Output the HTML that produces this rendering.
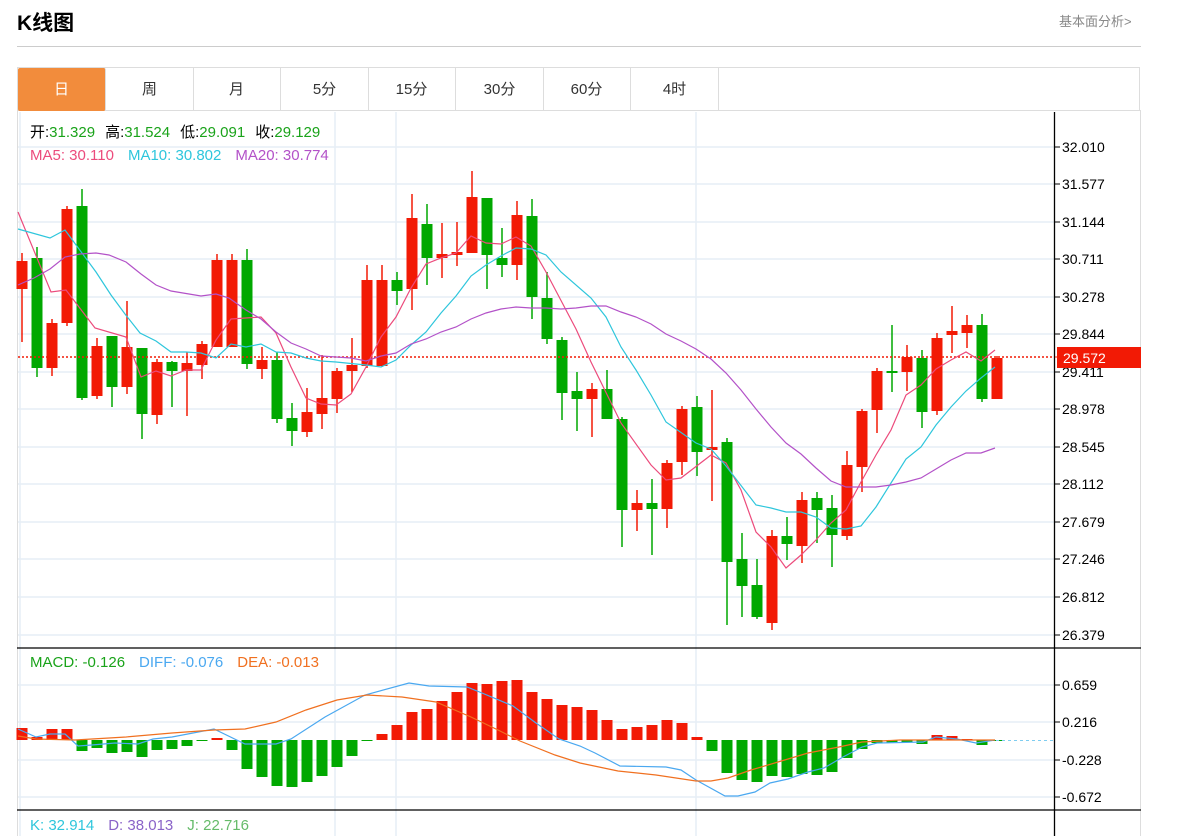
<!DOCTYPE html>
<html><head><meta charset="utf-8">
<style>
body{margin:0;background:#fff;width:1177px;height:836px;overflow:hidden;font-family:"Liberation Sans","Noto Sans CJK SC",sans-serif;}
.t{position:absolute;left:17px;top:7px;font-size:21px;font-weight:bold;color:#000;}
.r{position:absolute;left:1059px;top:11px;font-size:13px;color:#888;}
.hl{position:absolute;left:17px;top:46px;width:1124px;height:1px;background:#ccc;}
.tabs{position:absolute;left:17px;top:67px;width:1123px;height:44px;border:1px solid #ddd;box-sizing:border-box;}
.tab{position:absolute;top:0;height:43px;width:88px;border-right:1px solid #ddd;box-sizing:border-box;text-align:center;line-height:43px;font-size:15px;color:#333;}
.act{background:#f28c3c;color:#fff;border-radius:2px;}
.box{position:absolute;left:17px;top:110px;width:1124px;height:726px;border-left:1px solid #ddd;border-right:1px solid #ddd;box-sizing:border-box;}
svg{position:absolute;left:0;top:0;}
</style></head><body>
<div class="t">K线图</div>
<div class="r">基本面分析&gt;</div>
<div class="hl"></div>
<div class="tabs">
<div class="tab act" style="left:0">日</div>
<div class="tab" style="left:88px">周</div>
<div class="tab" style="left:175px">月</div>
<div class="tab" style="left:263px">5分</div>
<div class="tab" style="left:350px">15分</div>
<div class="tab" style="left:438px">30分</div>
<div class="tab" style="left:525px">60分</div>
<div class="tab" style="left:613px">4时</div>
</div>
<div class="box"></div>
<svg id="s" width="1177" height="836" xmlns="http://www.w3.org/2000/svg" font-family="Liberation Sans, Noto Sans CJK SC, sans-serif">
<g id="grid" stroke="#e6eef5" stroke-width="1.5"></g>
<g id="c"></g>
<line x1="18" y1="357" x2="1055" y2="357" stroke="#f21a05" stroke-width="1.5" stroke-dasharray="2,2"/>
<g id="ma" fill="none" stroke-width="1.2"></g>
<line x1="17" y1="648" x2="1141" y2="648" stroke="#000" stroke-width="1.3"/>
<line x1="17" y1="810" x2="1141" y2="810" stroke="#000" stroke-width="1.3"/>
<line x1="1054.5" y1="112" x2="1054.5" y2="836" stroke="#000" stroke-width="1.3"/>
<line x1="996" y1="740.5" x2="1055" y2="740.5" stroke="#7fcdf0" stroke-dasharray="3,3"/>
<g id="ax" font-size="14" fill="#000"></g>
<rect x="1057" y="347" width="84" height="21" fill="#f21a05"/>
<line x1="1055" y1="357" x2="1060" y2="357" stroke="#f21a05"/>
<text x="1063" y="363" font-size="14" fill="#fff">29.572</text>
<text x="30" y="137" font-size="15"><tspan fill="#000">开:</tspan><tspan fill="#1aa31a">31.329</tspan><tspan fill="#000" dx="10">高:</tspan><tspan fill="#1aa31a">31.524</tspan><tspan fill="#000" dx="10">低:</tspan><tspan fill="#1aa31a">29.091</tspan><tspan fill="#000" dx="10">收:</tspan><tspan fill="#1aa31a">29.129</tspan></text>
<text x="30" y="160" font-size="15"><tspan fill="#ec4b7c">MA5: 30.110</tspan><tspan fill="#2ec6dc" dx="14">MA10: 30.802</tspan><tspan fill="#b352c8" dx="14">MA20: 30.774</tspan></text>
<text x="30" y="667" font-size="15"><tspan fill="#1aa31a">MACD: -0.126</tspan><tspan fill="#4aa8f0" dx="14">DIFF: -0.076</tspan><tspan fill="#f07020" dx="14">DEA: -0.013</tspan></text>
<text x="30" y="830" font-size="15"><tspan fill="#2ec6dc">K: 32.914</tspan><tspan fill="#8a63c8" dx="14">D: 38.013</tspan><tspan fill="#66bb6a" dx="14">J: 22.716</tspan></text>
</svg>
<script>
var NS="http://www.w3.org/2000/svg";
function el(p,t,a){var e=document.createElementNS(NS,t);for(var k in a)e.setAttribute(k,a[k]);document.getElementById(p).appendChild(e);return e;}
var gy=[147,184,222,259,297,334,372,409,447,484,522,559,597,635,685,722,760,797];
gy.forEach(function(y){el('grid','line',{x1:18,y1:y,x2:1055,y2:y});});
[20,335,396,696].forEach(function(x){el('grid','line',{x1:x,y1:112,x2:x,y2:836});});
var R="#f21a05",G="#00a800";
var d=[
['r',261,289,253,342],['g',258,368,247,377],['r',323,368,319,376],['r',209,323,206,326],['g',206,398,189,400],
['r',346,396,338,399],['g',336,387,336,407],['r',347,387,301,394],['g',348,414,348,439],['r',362,415,359,424],
['g',362,371,361,407],['r',363,371,352,416],['r',344,365,341,379],['r',260,347,254,347],['r',260,347,254,347],
['g',260,364,249,369],['r',360,369,347,379],['g',360,419,352,423],['g',418,431,403,446],['r',412,432,388,437],
['r',398,414,355,429],['r',371,399,368,413],['r',365,371,338,392],['r',280,366,265,368],['r',280,366,265,367],
['g',280,291,272,305],['r',218,289,194,310],['g',224,258,204,285],['r',254,258,223,278],['r',252,255,222,266],
['r',197,253,171,253],['g',198,255,198,289],['g',258,265,228,277],['r',215,265,201,280],['g',216,297,199,319],
['g',298,339,272,344],['g',340,393,337,420],['g',391,399,372,431],['r',389,399,383,437],['g',389,419,370,419],
['g',419,510,417,547],['r',503,510,490,531],['g',503,509,479,555],['r',463,509,460,528],['r',409,462,406,475],
['g',407,452,396,476],['r',447,450,390,501],['g',442,562,438,625],['g',559,586,533,617],['g',585,617,559,619],
['r',536,623,530,630],['g',536,544,517,560],['r',500,546,492,563],['g',498,510,492,543],['g',508,535,495,567],
['r',465,536,451,540],['r',411,467,409,492],['r',371,410,368,433],['g',371,373,325,392],['r',357,372,345,391],
['g',358,412,350,428],['r',338,411,333,415],['r',331,335,306,353],['r',325,333,315,348],['g',325,399,314,402],
['r',358,399,356,399]];
d.forEach(function(c,i){var x=22+15*i,col=c[0]=='r'?R:G;
el('c','line',{x1:x,y1:c[3],x2:x,y2:c[4],stroke:col,'stroke-width':1.5});
el('c','rect',{x:x-5.5,y:c[1],width:11,height:Math.max(2,c[2]-c[1]),fill:col});});
var mh=[728,737,729,729,751,748,753,752,757,750,749,746,741,738,750,769,777,786,787,782,776,767,756,741,734,725,712,709,701,692,683,684,681,680,692,699,705,707,710,720,729,727,725,720,723,737,751,773,780,782,776,777,774,775,772,758,749,743,743,742,744,735,736,739,745,741];
mh.forEach(function(y,i){var x=22+15*i,col=y<740?R:G;var t=Math.min(y,740),h=Math.abs(y-740);if(h<1)h=1;
el('c','rect',{x:x-5.5,y:t,width:11,height:h,fill:col});});
function pl(pts,col){el('ma','polyline',{points:pts,stroke:col});}
pl("18,212 51,292 66,290 95,328 126,337 141,377 156,371 171,376 186,370 201,370 216,340 231,319 261,317 276,333 291,367 306,398 321,404 336,405 351,394 366,367 381,337 396,317 411,288 426,264 441,258 456,253 471,236 486,243 501,244 516,237 531,246 546,272 576,329 591,362 621,423 651,465 666,480 681,478 711,455 726,463 741,490 756,532 771,547 786,568 801,555 816,540 831,523 846,510 861,482 876,455 891,430 906,395 921,385 936,369 951,360 966,352 981,361 995,350","#ec4b7c");
pl("18,229 50,238 65,230 96,272 111,295 125,314 140,333 156,341 171,352 186,352 201,353 216,358 231,344 246,347 261,344 276,352 291,353 306,358 321,361 336,362 366,365 381,367 396,360 411,345 426,332 441,313 456,296 471,276 486,265 501,256 516,248 531,249 546,255 561,272 591,298 606,317 621,347 636,370 651,395 666,422 696,443 711,449 726,466 756,505 771,508 786,512 801,512 816,517 831,528 846,529 861,526 876,507 891,483 906,459 921,447 936,425 951,407 966,391 981,378 995,367","#2ec6dc");
pl("18,285 34,278 50,269 65,257 80,254 96,253 109,255 126,262 141,274 156,285 171,291 201,296 216,294 229,298 246,310 261,319 276,332 291,343 306,349 321,356 336,357 351,358 366,361 381,356 396,353 411,344 426,339 441,332 456,327 471,319 486,313 501,309 516,307 531,308 546,308 561,309 576,308 591,306 606,306 621,312 636,317 651,324 666,334 681,341 696,349 711,359 726,373 741,390 756,409 771,427 786,443 801,454 816,468 831,481 846,487 861,487 876,487 891,485 906,482 921,478 936,469 951,460 966,453 981,453 995,448","#b352c8");
pl("18,729 36,737 50,734 65,734 78,746 92,745 115,743 138,744 153,739 172,737 214,729 245,744 276,744 291,739 325,717 365,695 409,683 429,686 467,687 482,693 513,706 536,723 559,739 580,746 595,753 620,766 666,767 681,770 696,780 725,796 738,796 755,792 770,783 788,779 808,772 824,768 843,757 862,747 877,743 923,742 936,737 957,739 976,743 995,740","#4aa8f0");
pl("18,736 36,739 75,740 126,737 172,733 214,730 245,729 276,722 306,710 337,700 367,695 402,697 436,702 471,717 498,730 520,741 555,755 580,763 618,771 656,775 696,781 711,781 728,778 751,770 778,762 808,753 839,747 862,742 900,740 995,740","#f07020");
var lab=[[147,"32.010"],[184,"31.577"],[222,"31.144"],[259,"30.711"],[297,"30.278"],[334,"29.844"],[372,"29.411"],[409,"28.978"],[447,"28.545"],[484,"28.112"],[522,"27.679"],[559,"27.246"],[597,"26.812"],[635,"26.379"],[685,"0.659"],[722,"0.216"],[760,"-0.228"],[797,"-0.672"]];
lab.forEach(function(l){el('ax','line',{x1:1055,y1:l[0],x2:1060,y2:l[0],stroke:'#000'});var t=el('ax','text',{x:1062,y:l[0]+5});t.textContent=l[1];});
</script>
</body></html>
